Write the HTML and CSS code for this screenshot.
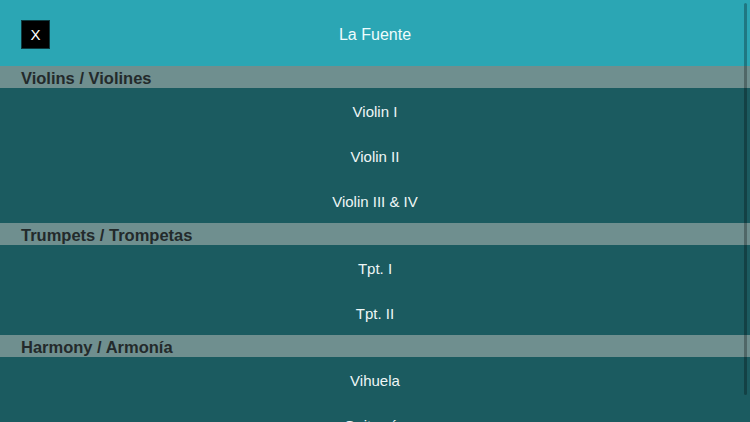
FILE: index.html
```html
<!DOCTYPE html>
<html lang="es">
<head>
<meta charset="utf-8">
<title>La Fuente</title>
<link rel="stylesheet" href="styles.css">
</head>
<body>
<div class="app">
  <header class="topbar">
    <button class="close">X</button>
    <h1 class="title">La Fuente</h1>
  </header>
  <main class="list">
    <div class="section">Violins / Violines</div>
    <div class="row">Violin I</div>
    <div class="row">Violin II</div>
    <div class="row">Violin III &amp; IV</div>
    <div class="section">Trumpets / Trompetas</div>
    <div class="row">Tpt. I</div>
    <div class="row">Tpt. II</div>
    <div class="section">Harmony / Armonía</div>
    <div class="row">Vihuela</div>
    <div class="row">Guitarrón</div>
    <div class="row">Bass / Bajo</div>
  </main>
  <div class="scroll-indicator"></div>
</div>
</body>
</html>
```
FILE: styles.css
```css
html, body {
  margin: 0;
  padding: 0;
  height: 100%;
  overflow: hidden;
}
body {
  font-family: "Liberation Sans", Arial, Helvetica, sans-serif;
  background: #1b5b60;
}
.app {
  position: relative;
  width: 750px;
  height: 422px;
  overflow: hidden;
}
.topbar {
  height: 66px;
  box-sizing: border-box;
  padding-top: 3px;
  background: #2ba6b4;
  display: flex;
  align-items: center;
  justify-content: center;
  position: relative;
}
.close {
  position: absolute;
  left: 21px;
  top: 20px;
  width: 29px;
  height: 29px;
  margin: 0;
  padding: 0;
  border: 1px solid #0d3a3f;
  background: #000;
  color: #fff;
  font-family: "Liberation Sans", Arial, sans-serif;
  font-size: 15px;
  line-height: 27px;
  text-align: center;
}
.title {
  margin: 0;
  font-size: 16px;
  font-weight: normal;
  color: #eefcfd;
}
.list {
  display: flex;
  flex-direction: column;
}
.section {
  height: 22px;
  box-sizing: border-box;
  padding-top: 1px;
  line-height: 23px;
  background: #6f8f8f;
  color: #232a2b;
  font-size: 16.5px;
  font-weight: bold;
  padding-left: 21px;
  overflow: hidden;
}
.row {
  height: 45px;
  box-sizing: border-box;
  padding-top: 1px;
  display: flex;
  align-items: center;
  justify-content: center;
  background: #1b5b60;
  color: #eef6f6;
  font-size: 15px;
}
.scroll-indicator {
  position: absolute;
  left: 744px;
  top: 3px;
  width: 3px;
  height: 392px;
  border-radius: 2px;
  background: rgba(0, 0, 0, 0.28);
}
```
